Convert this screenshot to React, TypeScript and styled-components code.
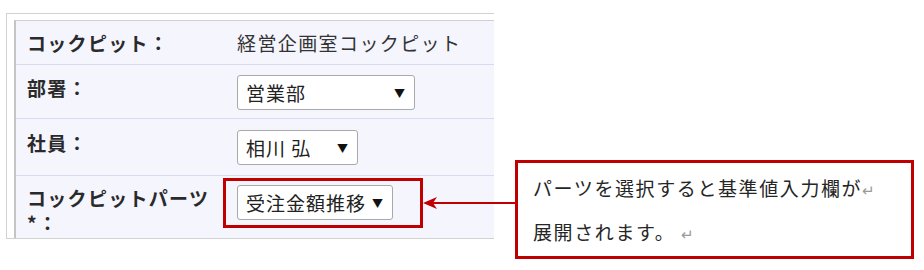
import * as React from "react";
import styled, { createGlobalStyle } from "styled-components";

const GlobalStyle = createGlobalStyle`
  * { box-sizing: border-box; }
  body {
    margin: 0;
    background: #ffffff;
    font-family: "Noto Sans CJK JP", "Noto Sans", sans-serif;
    color: #222;
  }
`;

const Page = styled.div`
  position: relative;
  display: flex;
  align-items: flex-start;
  width: 924px;
  height: 270px;
`;

const Frame = styled.div`
  width: 488px;
  margin: 13px 0 0 6px;
  padding: 6px 0 0 7px;
  border: 1px solid #d2d2d2;
  border-right: none;
`;

const Panel = styled.div`
  background: #f5f5fe;
  border-top: 1px solid #d0d0d0;
  border-left: 2px solid #c4c4c4;
`;

const Row = styled.div<{ $h: number; $pt: number; $center?: boolean; $last?: boolean }>`
  display: flex;
  align-items: ${(p) => (p.$center ? "center" : "flex-start")};
  height: ${(p) => p.$h}px;
  padding: ${(p) => p.$pt}px 0 0 11px;
  border-bottom: ${(p) => (p.$last ? "none" : "1px solid #d9d9f0")};
`;

const Label = styled.div<{ $mt?: number }>`
  width: 210px;
  flex: none;
  padding-right: 12px;
  margin-top: ${(p) => p.$mt ?? 0}px;
  font-size: 19px;
  letter-spacing: 1.3px;
  line-height: 25px;
  font-weight: bold;
  color: #2a2a2a;
`;

const Value = styled.div`
  font-size: 19px;
  letter-spacing: 1.4px;
  line-height: 25px;
  color: #333;
`;

const Select = styled.div<{ $w: number }>`
  display: flex;
  align-items: center;
  justify-content: space-between;
  width: ${(p) => p.$w}px;
  height: 35px;
  padding: 0 9px 0 8px;
  background: #ffffff;
  border: 1px solid #a9a9a9;
  border-radius: 3px;
  font-size: 19px;
  letter-spacing: 1px;
  color: #222;
`;

const Caret = styled.span`
  font-size: 11px;
  letter-spacing: 0;
  color: #111;
`;

const Highlight = styled.div`
  margin-left: -14px;
  padding: 4px 27px 5px 11px;
  border: 3px solid #c00000;
`;

const Callout = styled.div`
  width: 399px;
  height: 99px;
  margin: 160px 0 0 21px;
  padding: 4px 0 0 15px;
  border: 3px solid #c00000;
  background: #ffffff;
`;

const CalloutLine = styled.div`
  font-size: 19px;
  letter-spacing: 1.6px;
  line-height: 42px;
  color: #262626;
  white-space: nowrap;
`;

const Mark = styled.span<{ $gap?: number }>`
  margin-left: ${(p) => p.$gap ?? 0}px;
  font-size: 15px;
  color: #9a9a9a;
`;

const Arrow = styled.svg`
  position: absolute;
  left: 423px;
  top: 197px;
`;

const Dropdown = ({ value, width }: { value: string; width: number }) => (
  <Select $w={width}>
    <span>{value}</span>
    <Caret>▼</Caret>
  </Select>
);

const App = () => {
  return (
    <Page>
      <GlobalStyle />
      <Frame>
        <Panel>
          <Row $h={44} $pt={0} $center>
            <Label>コックピット：</Label>
            <Value>経営企画室コックピット</Value>
          </Row>
          <Row $h={54} $pt={10}>
            <Label>部署：</Label>
            <Dropdown value="営業部" width={178} />
          </Row>
          <Row $h={57} $pt={11}>
            <Label>社員：</Label>
            <Dropdown value="相川 弘" width={121} />
          </Row>
          <Row $h={62} $pt={2} $last>
            <Label $mt={7}>コックピットパーツ*：</Label>
            <Highlight>
              <Dropdown value="受注金額推移" width={156} />
            </Highlight>
          </Row>
        </Panel>
      </Frame>
      <Callout>
        <CalloutLine>
          パーツを選択すると基準値入力欄が<Mark>↵</Mark>
        </CalloutLine>
        <CalloutLine>
          展開されます。<Mark $gap={6}>↵</Mark>
        </CalloutLine>
      </Callout>
      <Arrow width="94" height="12" viewBox="0 0 94 12">
        <line x1="10" y1="6" x2="94" y2="6" stroke="#c00000" strokeWidth="2" />
        <path d="M0 6 L14 0 L10 6 L14 12 Z" fill="#c00000" />
      </Arrow>
    </Page>
  );
};

export default App;
